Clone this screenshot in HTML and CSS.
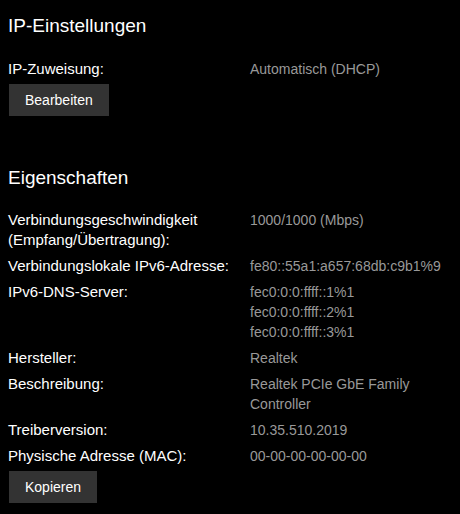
FILE: index.html
```html
<!DOCTYPE html>
<html lang="de">

<head>
    <meta charset="UTF-8">
    <meta name="viewport" content="width=device-width, initial-scale=1.0">
    <title>Netzwerkeigenschaften</title>
    <link rel="stylesheet" href="styles.css">
</head>

<body>
    <section class="group group-ip">
        <h2 class="group-title">IP-Einstellungen</h2>
        <dl class="props">
            <dt>IP-Zuweisung:</dt>
            <dd>Automatisch (DHCP)</dd>
        </dl>
        <button class="btn">Bearbeiten</button>
    </section>

    <section class="group group-props">
        <h2 class="group-title">Eigenschaften</h2>
        <dl class="props">
            <dt>Verbindungsgeschwindigkeit<br>(Empfang/Übertragung):</dt>
            <dd>1000/1000 (Mbps)</dd>
            <dt>Verbindungslokale IPv6-Adresse:</dt>
            <dd>fe80::55a1:a657:68db:c9b1%9</dd>
            <dt>IPv6-DNS-Server:</dt>
            <dd>fec0:0:0:ffff::1%1<br>fec0:0:0:ffff::2%1<br>fec0:0:0:ffff::3%1</dd>
            <dt>Hersteller:</dt>
            <dd>Realtek</dd>
            <dt>Beschreibung:</dt>
            <dd>Realtek PCIe GbE Family<br>Controller</dd>
            <dt>Treiberversion:</dt>
            <dd>10.35.510.2019</dd>
            <dt>Physische Adresse (MAC):</dt>
            <dd>00-00-00-00-00-00</dd>
        </dl>
        <button class="btn">Kopieren</button>
    </section>
</body>

</html>
```

FILE: styles.css
```css
body {
    margin: 0;
    padding: 12px 8px 0 8px;
    background: #000;
    color: #fff;
    font-family: "Liberation Sans", Arial, sans-serif;
    font-size: 14px;
    line-height: 20px;
}

.group-title {
    margin: 0;
    font-size: 19px;
    font-weight: normal;
    line-height: 28px;
}

.group-props {
    margin-top: 48px;
}

.props {
    display: grid;
    grid-template-columns: 242px 1fr;
    row-gap: 6px;
    margin: 18px 0 5px 0;
}

.group-ip .props {
    margin-top: 19px;
}

.props dt {
    margin: 0;
    font-size: 15px;
}

.props dd {
    margin: 0;
    color: #999;
}

.btn {
    display: block;
    margin-left: 1px;
    padding: 6px 16px;
    border: none;
    background: #333;
    color: #fff;
    font-family: inherit;
    font-size: 14px;
    line-height: 20px;
}
```
